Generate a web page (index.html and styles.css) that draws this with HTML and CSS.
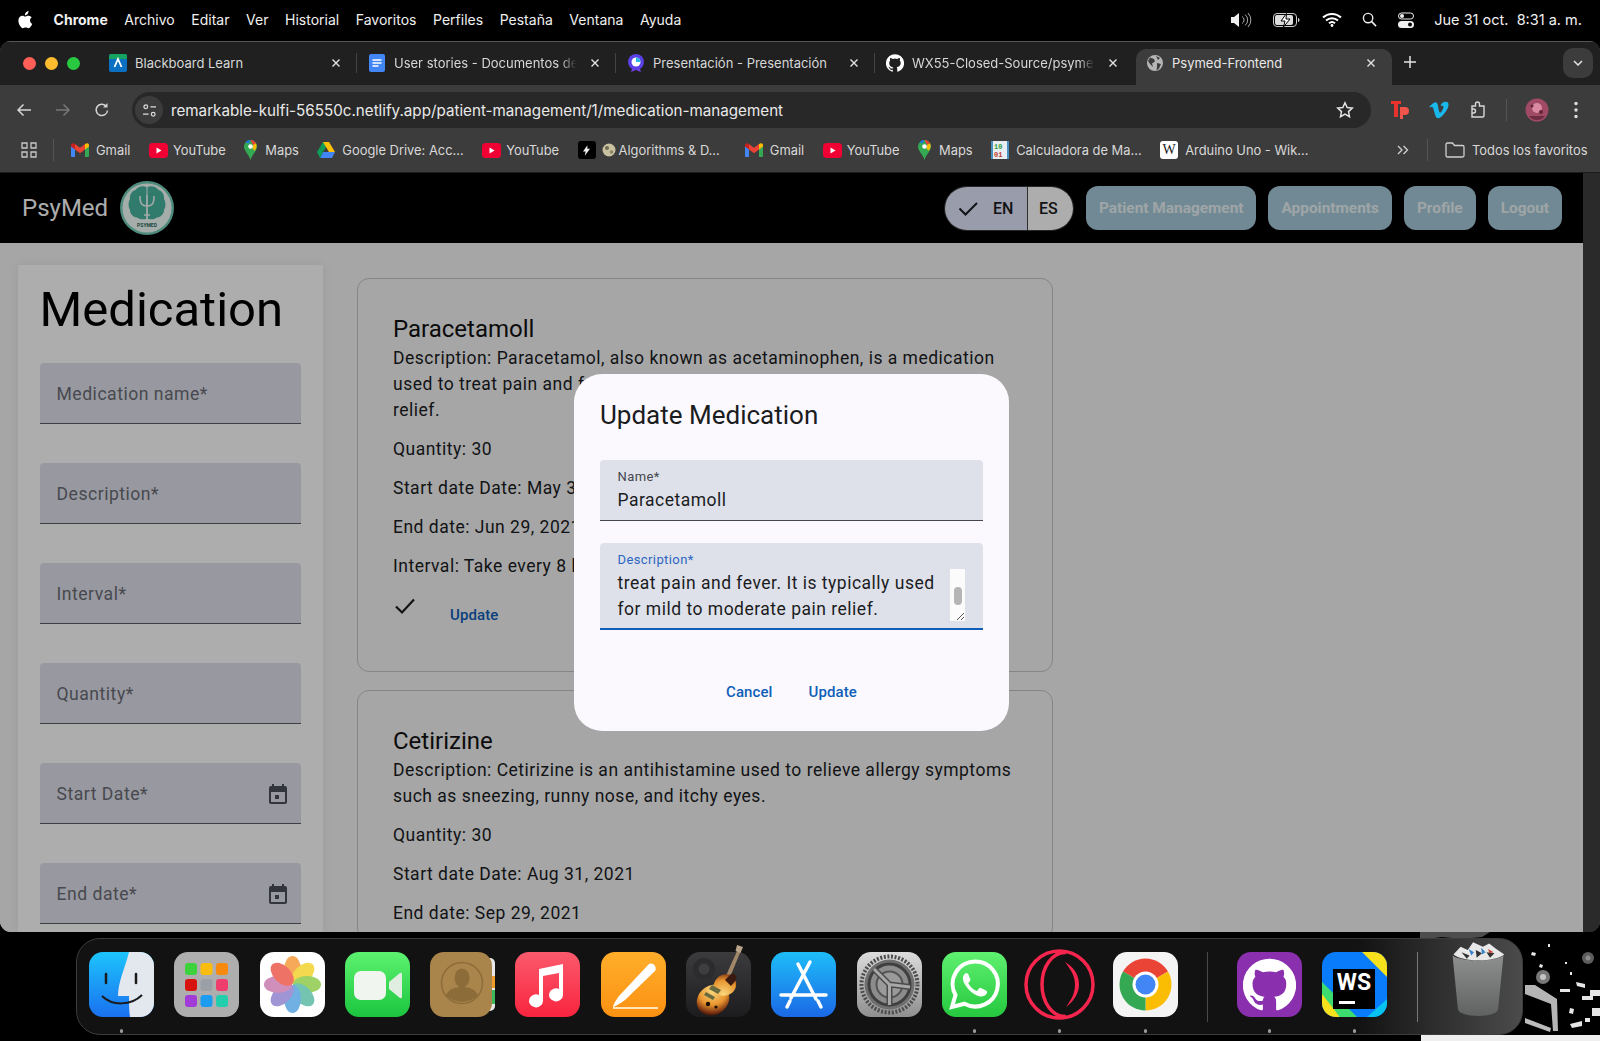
FILE: index.html
```html
<!DOCTYPE html>
<html lang="es">
<head>
<meta charset="utf-8">
<title>Psymed-Frontend</title>
<link rel="stylesheet" href="styles.css">
</head>
<body>
<svg class="defs" width="0" height="0" aria-hidden="true">
  <defs>
    <symbol id="s-gmail" viewBox="0 0 18 14">
      <path d="M0 3v10a1 1 0 0 0 1 1h3V6z" fill="#4285f4"/>
      <path d="M18 3v10a1 1 0 0 1-1 1h-3V6z" fill="#34a853"/>
      <path d="M14 1v5.500l4-3V2c0-1.500-1.700-2.300-2.800-1.400z" fill="#fbbc04"/>
      <path d="M4 6.500V1l5 3.800L14 1v5.500L9 10.300z" fill="#ea4335"/>
      <path d="M0 2v1.500l4 3V1L2.800.600C1.700-.300 0 .500 0 2z" fill="#c5221f"/>
    </symbol>
    <symbol id="s-yt" viewBox="0 0 19 15">
      <rect width="19" height="15" rx="3.500" fill="#f00033"/>
      <path d="M7.500 4.500v6l5-3z" fill="#fff"/>
    </symbol>
    <symbol id="s-maps" viewBox="0 0 13 20">
      <path d="M6.500 0A6.500 6.500 0 0 0 0 6.500c0 4.500 5 8 6.500 13.500C8 14.500 13 11 13 6.500A6.500 6.500 0 0 0 6.500 0z" fill="#34a853"/>
      <path d="M1.500 2.300A6.500 6.500 0 0 1 6.500 0l-2 3.500z" fill="#1a73e8"/>
      <path d="M6.500 0A6.500 6.500 0 0 1 12 3.300L9 5z" fill="#ea4335"/>
      <path d="M12 3.300c1.200 3 .5 5-1.500 7.500L8.500 8.500 9 5z" fill="#fbbc04"/>
      <circle cx="6.500" cy="6.500" r="2.300" fill="#fff"/>
    </symbol>
    <symbol id="s-close" viewBox="0 0 10 10">
      <path d="M1.500 1.500l7 7M8.500 1.500l-7 7" stroke="#e3e3e3" stroke-width="1.400" fill="none"/>
    </symbol>
    <symbol id="s-cal" viewBox="0 0 24 24">
      <path d="M19 4h-1V2h-2v2H8V2H6v2H5a2 2 0 0 0-2 2v14a2 2 0 0 0 2 2h14a2 2 0 0 0 2-2V6a2 2 0 0 0-2-2zm0 16H5V10h14zM9 13h4v4H9z" fill="#44474e"/>
    </symbol>
    <symbol id="s-gh" viewBox="0 0 24 24">
      <path d="M12 .3a12 12 0 0 0-3.800 23.400c.6.100.8-.3.8-.6v-2c-3.300.7-4-1.600-4-1.600-.6-1.400-1.400-1.800-1.400-1.800-1-.7.100-.7.100-.7 1.200.1 1.800 1.200 1.800 1.200 1 1.800 2.800 1.300 3.500 1 .1-.8.4-1.300.8-1.600-2.700-.3-5.500-1.300-5.500-6 0-1.200.5-2.300 1.300-3.100-.2-.4-.6-1.600 0-3.200 0 0 1-.3 3.400 1.200a11.500 11.500 0 0 1 6 0c2.300-1.500 3.300-1.200 3.300-1.200.6 1.600.2 2.800 0 3.200.9.800 1.300 1.900 1.300 3.200 0 4.600-2.800 5.600-5.500 5.900.5.400.9 1 .9 2.200v3.300c0 .3.100.7.8.6A12 12 0 0 0 12 .3"/>
    </symbol>
    <linearGradient id="g-finder" x1="0" y1="0" x2="0" y2="1"><stop offset="0" stop-color="#1dc4fc"/><stop offset="1" stop-color="#1a70f0"/></linearGradient>
    <linearGradient id="g-face" x1="0" y1="0" x2="0" y2="1"><stop offset="0" stop-color="#5df26f"/><stop offset="1" stop-color="#1bc53e"/></linearGradient>
    <linearGradient id="g-music" x1="0" y1="0" x2="0" y2="1"><stop offset="0" stop-color="#fb5a6c"/><stop offset="1" stop-color="#f9243f"/></linearGradient>
    <linearGradient id="g-pages" x1="0" y1="0" x2="0" y2="1"><stop offset="0" stop-color="#ffae2b"/><stop offset="1" stop-color="#fb9112"/></linearGradient>
    <linearGradient id="g-store" x1="0" y1="0" x2="0" y2="1"><stop offset="0" stop-color="#1ebdf8"/><stop offset="1" stop-color="#1b68e6"/></linearGradient>
    <linearGradient id="g-set" x1="0" y1="0" x2="0" y2="1"><stop offset="0" stop-color="#dcdcdc"/><stop offset="1" stop-color="#8f8f8f"/></linearGradient>
    <linearGradient id="g-wa" x1="0" y1="0" x2="0" y2="1"><stop offset="0" stop-color="#5ff06f"/><stop offset="1" stop-color="#25c83f"/></linearGradient>
    <linearGradient id="g-trash" x1="0" y1="0" x2="0" y2="1"><stop offset="0" stop-color="#8e9090"/><stop offset="1" stop-color="#606262"/></linearGradient>
    <linearGradient id="g-gb" x1="0" y1="0" x2="0" y2="1"><stop offset="0" stop-color="#3c3c3e"/><stop offset="1" stop-color="#1c1c1e"/></linearGradient>
    <radialGradient id="g-guitar" gradientUnits="userSpaceOnUse" cx="32" cy="40" r="26"><stop offset="0" stop-color="#f9da80"/><stop offset=".55" stop-color="#e8952f"/><stop offset=".85" stop-color="#7a3212"/><stop offset="1" stop-color="#2a0e06"/></radialGradient>
  </defs>
</svg>

<div class="wallpaper">
  <svg viewBox="0 0 180 109" width="180" height="109" preserveAspectRatio="none" aria-hidden="true">
    <rect width="180" height="109" fill="#000"/>
    <rect x="1" y="103" width="179" height="6" fill="#efefef"/>
    <path d="M0 0h70l-8 5-20 2-20-2-22 3z" fill="#4d4d4d"/>
    <path d="M105 53l10 0 22 14 1 32-5 0-2-27-26-10z" fill="#b5b5b5"/>
    <path d="M105 86l26 10-1 4-25-9z" fill="#bcbcbc"/>
    <circle cx="123" cy="45" r="7" fill="#777"/><circle cx="123" cy="45" r="3" fill="#c4c4c4"/>
    <circle cx="168" cy="26" r="6" fill="#5c5c5c"/><circle cx="168" cy="26" r="2.500" fill="#8c8c8c"/>
    <path d="M140 57h10v3h-10zM156 50l9 2v4l-8-2zM162 64h11v4h-11zM170 58h10v6h-10zM150 92l12-3v5l-10 2zM112 20l4 1-1 3-4-1zM120 32l3 1-1 3-3-1zM172 76h8v8h-8zM150 76l4 1-1 5-4-1zM165 86h5v4h-5zM128 12h2v3h-2zM145 30h2v2h-2zM150 40h2v3h-2z" fill="#e6e6e6"/>
  </svg>
</div>

<header class="menubar">
  <div class="menu-left">
    <svg class="apple" viewBox="0 0 16 19" width="15" height="18" aria-hidden="true"><path fill="#fff" d="M11.200 0c.1 1.100-.3 2.200-1 3-.7.800-1.800 1.400-2.800 1.300-.1-1.100.4-2.200 1-2.900C9.100.6 10.300.100 11.200 0zM14.700 6.500c-.1.100-1.900 1.100-1.900 3.400 0 2.600 2.300 3.500 2.400 3.600 0 .1-.4 1.300-1.200 2.500-.8 1.100-1.600 2.200-2.800 2.200-1.200 0-1.600-.7-3-.7s-1.900.7-3 .7c-1.200 0-2-1.100-2.900-2.300C1.200 14.400.4 12.200.4 10.100c0-3.400 2.200-5.200 4.400-5.200 1.200 0 2.100.8 2.900.8.700 0 1.800-.8 3.100-.8.500 0 2.500 0 3.900 1.600z"/></svg>
    <span class="menu-app">Chrome</span>
    <span>Archivo</span><span>Editar</span><span>Ver</span><span>Historial</span><span>Favoritos</span><span>Perfiles</span><span>Pestaña</span><span>Ventana</span><span>Ayuda</span>
  </div>
  <div class="menu-right">
    <svg viewBox="0 0 22 16" width="22" height="16" aria-hidden="true"><path d="M0 5h3l5-4v14l-5-4H0z" fill="#eee"/><path d="M11 4.500a4 4 0 0 1 0 7M14 2.500a7 7 0 0 1 0 11M17 1a10 10 0 0 1 0 14" stroke="#aaa" stroke-width="1" fill="none"/></svg>
    <svg viewBox="0 0 28 14" width="28" height="14" aria-hidden="true"><rect x=".5" y=".5" width="23" height="13" rx="3.500" fill="none" stroke="#ccc"/><rect x="2" y="2" width="18" height="10" rx="2" fill="#ddd"/><path d="M25 5v4c1 0 1.500-1 1.500-2S26 5 25 5z" fill="#ccc"/><path d="M13.500 0.500L8 8h4l-1.500 6L17 6h-4z" fill="#fff" stroke="#000" stroke-width="1"/></svg>
    <svg viewBox="0 0 20 15" width="20" height="15" aria-hidden="true"><path d="M1 5.500a13 13 0 0 1 18 0M4 8.500a9 9 0 0 1 12 0M7 11.300a4.500 4.500 0 0 1 6 0" stroke="#fff" stroke-width="2" fill="none"/><circle cx="10" cy="13.500" r="1.400" fill="#fff"/></svg>
    <svg viewBox="0 0 16 16" width="15" height="15" aria-hidden="true"><circle cx="6.500" cy="6.500" r="5" stroke="#eee" stroke-width="1.500" fill="none"/><path d="M10.300 10.300L15 15" stroke="#eee" stroke-width="1.700"/></svg>
    <svg viewBox="0 0 16 16" width="16" height="16" aria-hidden="true"><rect x=".5" y="1" width="15" height="6" rx="3" fill="none" stroke="#eee"/><circle cx="4" cy="4" r="2" fill="#eee"/><rect y="9" width="16" height="7" rx="3.500" fill="#eee"/><circle cx="12" cy="12.500" r="2" fill="#000"/></svg>
    <span class="clock">Jue 31 oct.&nbsp; 8:31 a. m.</span>
  </div>
</header>

<div class="window">
  <div class="tabstrip">
    <div class="lights"><i class="light red"></i><i class="light yellow"></i><i class="light green"></i></div>
    <div class="tab">
      <svg class="fav" viewBox="0 0 18 18" aria-hidden="true"><rect width="18" height="18" rx="2" fill="#0b6fc2"/><path d="M0 2a2 2 0 0 1 2-2h14a2 2 0 0 1 2 2v3H0z" fill="#16a35f"/><path d="M5.500 13L9 5l3.500 8" stroke="#fff" stroke-width="1.800" fill="none"/></svg>
      <span class="tab-title">Blackboard Learn</span>
      <svg class="tab-x" aria-hidden="true"><use href="#s-close"/></svg>
    </div>
    <div class="tab">
      <svg class="fav" viewBox="0 0 18 18" aria-hidden="true"><rect x="1" width="16" height="18" rx="2" fill="#4285f4"/><path d="M4.500 6h9M4.500 9h9M4.500 12h6" stroke="#fff" stroke-width="1.500"/></svg>
      <span class="tab-title fade">User stories - Documentos de</span>
      <svg class="tab-x" aria-hidden="true"><use href="#s-close"/></svg>
    </div>
    <div class="tab">
      <svg class="fav" viewBox="0 0 18 18" aria-hidden="true"><path d="M5 15l-1 3 5-2 5 2-1-3z" fill="#7b3fe4"/><circle cx="9" cy="8" r="8" fill="#5a3fe4"/><circle cx="9" cy="8" r="4.500" fill="#fff"/><path d="M9 8V3.500A4.500 4.500 0 0 1 13.500 8z" fill="#28b8e8"/></svg>
      <span class="tab-title">Presentación - Presentación</span>
      <svg class="tab-x" aria-hidden="true"><use href="#s-close"/></svg>
    </div>
    <div class="tab">
      <svg class="fav fav-gh" aria-hidden="true"><use href="#s-gh"/></svg>
      <span class="tab-title fade">WX55-Closed-Source/psymed</span>
      <svg class="tab-x" aria-hidden="true"><use href="#s-close"/></svg>
    </div>
    <div class="tab tab-active">
      <svg class="fav" viewBox="0 0 18 18" aria-hidden="true"><circle cx="9" cy="9" r="8" fill="#b5b5b5"/><path d="M4 3.500l4 1.500 1 2.500-3 2 1 3.500-3-3-2-3zM11 9l4 1-2 4.500-2.500 2 .5-3.500zM10 2l4 2-2 2z" fill="#3c3c3c"/></svg>
      <span class="tab-title">Psymed-Frontend</span>
      <svg class="tab-x" aria-hidden="true"><use href="#s-close"/></svg>
    </div>
    <svg class="tab-plus" viewBox="0 0 14 14" aria-hidden="true"><path d="M7 1v12M1 7h12" stroke="#e3e3e3" stroke-width="1.500"/></svg>
    <div class="tab-menu"><svg viewBox="0 0 10 6" width="10" height="6" aria-hidden="true"><path d="M1 1l4 4 4-4" stroke="#e3e3e3" stroke-width="1.500" fill="none"/></svg></div>
  </div>

  <div class="toolbar">
    <svg class="nav" viewBox="0 0 16 16" aria-hidden="true"><path d="M15 8H2M7.500 2.500L2 8l5.500 5.500" stroke="#d4d4d4" stroke-width="1.500" fill="none"/></svg>
    <svg class="nav" viewBox="0 0 16 16" aria-hidden="true"><path d="M1 8h13M8.500 2.500L14 8l-5.500 5.500" stroke="#777" stroke-width="1.500" fill="none"/></svg>
    <svg class="nav" viewBox="0 0 16 16" aria-hidden="true"><path d="M13.500 8.500A5.700 5.700 0 1 1 12 4" stroke="#d4d4d4" stroke-width="1.500" fill="none"/><path d="M13.500 1v4.500H9z" fill="#d4d4d4"/></svg>
    <div class="omnibox">
      <span class="site-info"><svg viewBox="0 0 16 14" width="15" height="13" aria-hidden="true"><circle cx="4" cy="3" r="2" stroke="#ddd" stroke-width="1.300" fill="none"/><path d="M9 3h6M1 11h6" stroke="#ddd" stroke-width="1.300"/><circle cx="12" cy="11" r="2" stroke="#ddd" stroke-width="1.300" fill="none"/></svg></span>
      <span class="url">remarkable-kulfi-56550c.netlify.app/patient-management/1/medication-management</span>
      <svg class="star" viewBox="0 0 18 18" width="18" height="18" aria-hidden="true"><path d="M9 1.800l2.200 4.700 5.100.6-3.800 3.500 1 5.100L9 13.200l-4.500 2.500 1-5.100-3.800-3.500 5.100-.6z" stroke="#e3e3e3" stroke-width="1.500" fill="none"/></svg>
    </div>
    <div class="ext-row">
      <svg viewBox="0 0 18 20" width="18" height="20" aria-hidden="true"><path d="M0 1h10v3H7v13H3V4H0z" fill="#e8322c"/><path d="M9 7h5a3.500 3.500 0 0 1 0 8h-2v4H9z" fill="#f0544a"/></svg>
      <svg viewBox="0 0 20 18" width="20" height="18" aria-hidden="true"><path d="M19.500 4.500c-.1 1.900-1.400 4.500-4 7.800C13 15.700 10.800 17.300 9 17.300c-1.100 0-2-1-2.800-3L4.700 8.700C4.100 6.700 3.500 5.700 2.800 5.700c-.2 0-.7.300-1.500.9L.4 5.500C1.400 4.600 2.300 3.800 3.200 3c1.300-1.100 2.300-1.700 2.900-1.800 1.500-.1 2.500.9 2.800 3.100.4 2.400.7 3.900.8 4.400.4 2 .9 3 1.400 3 .4 0 1-.7 1.900-2 .9-1.400 1.300-2.400 1.400-3.100.1-1.200-.4-1.800-1.400-1.800-.5 0-1 .1-1.500.3C12.500 1.900 14.400.700 17 .800c1.800 0 2.700 1.300 2.500 3.700z" fill="#1ab7ea"/></svg>
      <svg viewBox="0 0 18 18" width="18" height="18" aria-hidden="true"><path d="M3 5h3.500V3a2 2 0 0 1 4 0v2H15v9.500a1.500 1.500 0 0 1-1.500 1.500H3zM3 5v3h1.500a1.500 1.500 0 0 1 0 4H3v4" stroke="#d8d8d8" stroke-width="1.400" fill="none"/></svg>
      <i class="ext-sep"></i>
      <svg viewBox="0 0 24 24" width="24" height="24" aria-hidden="true"><circle cx="12" cy="12" r="11.500" fill="#a04a66"/><circle cx="12" cy="10" r="5" fill="#d98aa2"/><circle cx="7" cy="8" r="1.500" fill="#642436"/><circle cx="16" cy="14" r="2" fill="#642436"/><path d="M4 18a10 10 0 0 0 16 0z" fill="#6c2d42"/></svg>
      <svg class="ext-dots" viewBox="0 0 4 18" width="4" height="18" aria-hidden="true"><circle cx="2" cy="2.500" r="1.700" fill="#ddd"/><circle cx="2" cy="9" r="1.700" fill="#ddd"/><circle cx="2" cy="15.500" r="1.700" fill="#ddd"/></svg>
    </div>
  </div>

  <nav class="bookmarks">
    <svg class="bm-grid" viewBox="0 0 16 16" aria-hidden="true"><path d="M1 1h5v5H1zM10 1h5v5h-5zM1 10h5v5H1zM10 10h5v5h-5z" stroke="#c8c8c8" stroke-width="1.300" fill="none"/></svg>
    <i class="bm-sep"></i>
    <a class="bm"><svg class="bi bi-g" aria-hidden="true"><use href="#s-gmail"/></svg>Gmail</a>
    <a class="bm"><svg class="bi bi-y" aria-hidden="true"><use href="#s-yt"/></svg>YouTube</a>
    <a class="bm"><svg class="bi bi-m" aria-hidden="true"><use href="#s-maps"/></svg>Maps</a>
    <a class="bm"><svg class="bi bi-d" viewBox="0 0 18 16" aria-hidden="true"><path d="M6 0h6L6 10 3 5z" fill="#0f9d58"/><path d="M12 0l6 10h-6L6 0z" fill="#ffc107"/><path d="M18 10l-3 6H3l3-6z" fill="#4285f4"/><path d="M6 10l-3 6-3-6 3-5z" fill="#0f9d58"/></svg>Google Drive: Acc...</a>
    <a class="bm"><svg class="bi bi-y" aria-hidden="true"><use href="#s-yt"/></svg>YouTube</a>
    <a class="bm bm-algo"><span class="bolt"><svg viewBox="0 0 8 12" width="7" height="11" aria-hidden="true"><path d="M5 0L0 7h3l-1 5 6-8H5z" fill="#eee"/></svg></span><svg class="bi bi-globe" viewBox="0 0 14 14" aria-hidden="true"><circle cx="7" cy="7" r="6.500" fill="#c9c2a0"/><circle cx="5" cy="5" r="2" fill="#6e6a50"/><circle cx="9.500" cy="9" r="1.800" fill="#8a8468"/></svg>Algorithms &amp; D...</a>
    <a class="bm"><svg class="bi bi-g" aria-hidden="true"><use href="#s-gmail"/></svg>Gmail</a>
    <a class="bm"><svg class="bi bi-y" aria-hidden="true"><use href="#s-yt"/></svg>YouTube</a>
    <a class="bm"><svg class="bi bi-m" aria-hidden="true"><use href="#s-maps"/></svg>Maps</a>
    <a class="bm"><svg class="bi bi-c" viewBox="0 0 18 18" aria-hidden="true"><rect width="18" height="18" fill="#e8eef2"/><rect x="0" y="0" width="2" height="18" fill="#4a8fc0"/><rect x="16" y="0" width="2" height="18" fill="#4a8fc0"/><text x="3" y="8" class="calc-a">10</text><text x="3" y="16" class="calc-b">01</text></svg>Calculadora de Ma...</a>
    <a class="bm"><span class="wiki">W</span>Arduino Uno - Wik...</a>
    <svg class="bm-more" viewBox="0 0 12 10" aria-hidden="true"><path d="M1 1l4 4-4 4M6.500 1l4 4-4 4" stroke="#d0d0d0" stroke-width="1.300" fill="none"/></svg>
    <i class="bm-sep bm-sep2"></i>
    <a class="bm bm-all"><svg class="bi bi-f" viewBox="0 0 20 16" aria-hidden="true"><path d="M1 2.500A1.500 1.500 0 0 1 2.500 1h5l2 2.500h8A1.500 1.500 0 0 1 19 5v8.500a1.500 1.500 0 0 1-1.500 1.500h-15A1.500 1.500 0 0 1 1 13.500z" stroke="#d0d0d0" stroke-width="1.300" fill="none"/></svg>Todos los favoritos</a>
  </nav>

  <div class="viewport">
    <div class="page">
      <div class="app-header">
        <div class="brand">
          <span class="brand-name">PsyMed</span>
          <svg class="logo" viewBox="0 0 54 54" width="54" height="54" aria-hidden="true">
            <circle cx="27" cy="27" r="27" fill="#74cfba"/>
            <circle cx="27" cy="27" r="24.500" fill="#f4fffb"/>
            <path d="M26.500 6c-4-2-9 0-11 3-4 1-6 5-5.500 9-2 3-2 8 0 11 0 4 3 7 7 7.500 3 2 7 2.500 9.500 1zM27.500 6c4-2 9 0 11 3 4 1 6 5 5.500 9 2 3 2 8 0 11 0 4-3 7-7 7.500-3 2-7 2.500-9.500 1z" fill="#47b5a0"/>
            <path d="M27 14v24M20 15c0 8 2 10 7 10s7-2 7-10M24 34h6" stroke="#eefaf7" stroke-width="1.600" fill="none"/>
            <text x="27" y="46" class="logo-text" text-anchor="middle">PSYMED</text>
          </svg>
        </div>
        <div class="header-actions">
          <div class="lang">
            <span class="lang-on"><svg viewBox="0 0 24 24" width="24" height="24" aria-hidden="true"><path d="M3.500 12.500l6 6L21 7" stroke="#1a1c22" stroke-width="2" fill="none"/></svg>EN</span>
            <span class="lang-off">ES</span>
          </div>
          <button class="nav-btn">Patient Management</button>
          <button class="nav-btn">Appointments</button>
          <button class="nav-btn">Profile</button>
          <button class="nav-btn">Logout</button>
        </div>
      </div>
      <main class="main">
        <aside class="sidebar">
          <h1 class="side-title">Medication</h1>
          <div class="field">Medication name*</div>
          <div class="field">Description*</div>
          <div class="field">Interval*</div>
          <div class="field">Quantity*</div>
          <div class="field">Start Date*<svg class="cal" aria-hidden="true"><use href="#s-cal"/></svg></div>
          <div class="field">End date*<svg class="cal" aria-hidden="true"><use href="#s-cal"/></svg></div>
        </aside>
        <section class="cards">
          <article class="card">
            <h2 class="card-title">Paracetamoll</h2>
            <p class="card-line">Description: Paracetamol, also known as acetaminophen, is a medication used to treat pain and fever. It is typically used for mild to moderate pain relief.</p>
            <p class="card-line">Quantity: 30</p>
            <p class="card-line">Start date Date: May 30, 2021</p>
            <p class="card-line">End date: Jun 29, 2021</p>
            <p class="card-line">Interval: Take every 8 hours</p>
            <div class="card-actions">
              <svg class="check" viewBox="0 0 24 24" width="24" height="24" aria-hidden="true"><path d="M3 12.500l6 6L21 5.500" stroke="#1a1c1e" stroke-width="2.200" fill="none"/></svg>
              <span class="card-update">Update</span>
            </div>
          </article>
          <article class="card">
            <h2 class="card-title">Cetirizine</h2>
            <p class="card-line">Description: Cetirizine is an antihistamine used to relieve allergy symptoms such as sneezing, runny nose, and itchy eyes.</p>
            <p class="card-line">Quantity: 30</p>
            <p class="card-line">Start date Date: Aug 31, 2021</p>
            <p class="card-line">End date: Sep 29, 2021</p>
          </article>
        </section>
      </main>
      <div class="scrim"></div>
      <div class="modal" role="dialog">
        <h2 class="modal-title">Update Medication</h2>
        <div class="m-field">
          <span class="m-label">Name*</span>
          <span class="m-value">Paracetamoll</span>
        </div>
        <div class="m-field m-field-focus">
          <span class="m-label m-label-focus">Description*</span>
          <span class="m-value">treat pain and fever. It is typically used<br>for mild to moderate pain relief.</span>
          <span class="m-scroll"><i class="m-thumb"></i><svg class="m-grip" viewBox="0 0 10 10" width="10" height="10" aria-hidden="true"><path d="M9 2L2 9M9 6L6 9" stroke="#555" stroke-width="1" fill="none"/></svg></span>
        </div>
        <div class="m-actions"><span class="m-btn">Cancel</span><span class="m-btn">Update</span></div>
      </div>
    </div>
    <div class="v-scrollbar"></div>
  </div>
</div>

<footer class="dock">
  <div class="dock-item dot">
    <svg viewBox="0 0 65 65" aria-hidden="true"><rect width="65" height="65" rx="14" fill="url(#g-finder)"/><path d="M40 0h11a14 14 0 0 1 14 14v37a14 14 0 0 1-14 14H41c-1-6-1-14-1-21h-11c0-14 7-28 11-44z" fill="#e3e7ee"/><path d="M17 22v9M47 22v9" stroke="#1a1a1a" stroke-width="2.500" stroke-linecap="round"/><path d="M13 44c10 10 29 10 40-1" stroke="#1a1a1a" stroke-width="2" fill="none"/></svg>
  </div>
  <div class="dock-item">
    <svg viewBox="0 0 65 65" aria-hidden="true"><rect width="65" height="65" rx="14" fill="#aeaeae"/><rect x="11" y="11" width="12" height="12" rx="3" fill="#3cd23c"/><rect x="26.500" y="11" width="12" height="12" rx="3" fill="#fbbd0d"/><rect x="42" y="11" width="12" height="12" rx="3" fill="#f78a0d"/><rect x="11" y="27" width="12" height="12" rx="3" fill="#d7130f"/><rect x="26.500" y="27" width="12" height="12" rx="3" fill="#9aa0a6"/><rect x="42" y="27" width="12" height="12" rx="3" fill="#ef3e6e"/><rect x="11" y="43" width="12" height="12" rx="3" fill="#a23cd8"/><rect x="26.500" y="43" width="12" height="12" rx="3" fill="#1b9cf0"/><rect x="42" y="43" width="12" height="12" rx="3" fill="#22ceac"/></svg>
  </div>
  <div class="dock-item">
    <svg viewBox="0 0 65 65" aria-hidden="true"><rect width="65" height="65" rx="14" fill="#fff"/><g opacity=".78"><ellipse cx="32.500" cy="18" rx="8.500" ry="14" fill="#f5912d"/><ellipse cx="32.500" cy="18" rx="8.500" ry="14" fill="#f2cf1d" transform="rotate(45 32.500 32.500)"/><ellipse cx="32.500" cy="18" rx="8.500" ry="14" fill="#83c53c" transform="rotate(90 32.500 32.500)"/><ellipse cx="32.500" cy="18" rx="8.500" ry="14" fill="#4cb49a" transform="rotate(135 32.500 32.500)"/><ellipse cx="32.500" cy="18" rx="8.500" ry="14" fill="#4a9bdc" transform="rotate(180 32.500 32.500)"/><ellipse cx="32.500" cy="18" rx="8.500" ry="14" fill="#8578c8" transform="rotate(225 32.500 32.500)"/><ellipse cx="32.500" cy="18" rx="8.500" ry="14" fill="#c46fa8" transform="rotate(270 32.500 32.500)"/><ellipse cx="32.500" cy="18" rx="8.500" ry="14" fill="#ea4b3c" transform="rotate(315 32.500 32.500)"/></g></svg>
  </div>
  <div class="dock-item">
    <svg viewBox="0 0 65 65" aria-hidden="true"><rect width="65" height="65" rx="14" fill="url(#g-face)"/><rect x="9" y="19" width="32" height="29" rx="7" fill="#f0f5f0"/><path d="M44 30l11-9c1-.5 2 0 2 1v23c0 1-1 1.500-2 1l-11-9z" fill="#dfeee0"/></svg>
  </div>
  <div class="dock-item">
    <svg viewBox="0 0 65 65" aria-hidden="true"><rect x="50" y="6" width="15" height="53" rx="5" fill="#e8e8e8"/><rect x="60" y="24" width="5" height="12" fill="#f09a2a"/><rect x="60" y="38" width="5" height="14" fill="#3bb85a"/><rect width="62" height="65" rx="14" fill="#a9854b"/><circle cx="32" cy="31" r="20.500" fill="none" stroke="#8c6c38" stroke-width="1.500"/><ellipse cx="32" cy="26" rx="7.500" ry="9.500" fill="#8c6c38"/><path d="M16 43c3-6 9-8 16-8s13 2 16 8c-8 9-24 9-32 0z" fill="#8c6c38"/></svg>
  </div>
  <div class="dock-item">
    <svg viewBox="0 0 65 65" aria-hidden="true"><rect width="65" height="65" rx="14" fill="url(#g-music)"/><path d="M24 17l24-5v31a7 6.500 0 1 1-4-6V21l-16 3v25a7 6.500 0 1 1-4-6z" fill="#fff"/></svg>
  </div>
  <div class="dock-item">
    <svg viewBox="0 0 65 65" aria-hidden="true"><rect width="65" height="65" rx="14" fill="url(#g-pages)"/><path d="M54 14c-2-3-5-3-7-1L18 44c-3 4-6 9-6 11 3-1 8-4 12-7l30-29c1-1 1-3 0-5z" fill="#fff"/><path d="M12 55h45v2H12z" fill="#ffe6b8"/></svg>
  </div>
  <div class="dock-item">
    <svg class="dock-over" viewBox="0 -18 65 83" aria-hidden="true">
      <rect width="65" height="65" rx="14" fill="url(#g-gb)"/>
      <circle cx="18" cy="17" r="11" fill="#2c2c2e"/><circle cx="18" cy="17" r="5.500" fill="#3e3e40"/>
      <path d="M38 28L52-3l3 1.500L42 30z" fill="#a08868"/>
      <path d="M51-7l6 2-2.500 6-5-2z" fill="#b8a488"/>
      <g fill="url(#g-guitar)">
        <ellipse cx="27" cy="48" rx="17" ry="14.500" transform="rotate(-35 27 48)"/>
        <ellipse cx="39" cy="33" rx="11.500" ry="10.500" transform="rotate(-35 39 33)"/>
      </g>
      <path d="M45 22c4-1 6 2 5 6l-5 6-6-6z" fill="#3a1a10"/>
      <path d="M26 33l9 5-3 4-9-5zM20 40l9 5-2 3-9-5z" fill="#6a6a40"/>
      <circle cx="22" cy="52" r="2.200" fill="#1c0e08"/><circle cx="30" cy="55" r="1.600" fill="#1c0e08"/>
    </svg>
  </div>
  <div class="dock-item">
    <svg viewBox="0 0 65 65" aria-hidden="true"><rect width="65" height="65" rx="14" fill="url(#g-store)"/><path d="M39 10L20 46M27 12l18 35M10 43h33M36 43h19M19 49l-3 6M47 49l3 6" stroke="#fff" stroke-width="3.500" stroke-linecap="round" fill="none"/></svg>
  </div>
  <div class="dock-item">
    <svg viewBox="0 0 65 65" aria-hidden="true"><rect width="65" height="65" rx="14" fill="url(#g-set)"/><circle cx="32.500" cy="32.500" r="28" fill="none" stroke="#4c4c4c" stroke-width="4" stroke-dasharray="2 1.600"/><circle cx="32.500" cy="32.500" r="25" fill="#6f6f6f"/><circle cx="32.500" cy="32.500" r="20.500" fill="#8c8c8c" stroke="#3f3f3f" stroke-width="3"/><circle cx="32.500" cy="32.500" r="13" fill="#9a9a9a" stroke="#555" stroke-width="2"/><path d="M32.500 32.500L17 17M32.500 32.500L53 35M32.500 32.500V53" stroke="#4a4a4a" stroke-width="6"/><path d="M32.500 32.500L17 17M32.500 32.500L53 35M32.500 32.500V53" stroke="#a8a8a8" stroke-width="3"/></svg>
  </div>
  <div class="dock-item dot">
    <svg viewBox="0 0 65 65" aria-hidden="true"><rect width="65" height="65" rx="14" fill="url(#g-wa)"/><path d="M33 9.500A22.500 22.500 0 0 0 13.500 43l-3.500 12 12.500-3.300A22.500 22.500 0 1 0 33 9.500z" fill="none" stroke="#fff" stroke-width="4"/><path d="M24 21c-2 1-3.500 3.500-3 6.500 1 6 9 15.500 17 17 3 .5 6-1 7-3.500.3-1.200 0-2-1-2.500l-5-2.500c-1-.4-1.500 0-2 .5l-1.500 2c-.5.500-1 .5-1.500.3-3-1.300-6-4.300-7.500-7-.2-.6 0-1 .4-1.500l1.300-1.600c.3-.5.3-1 .1-1.500l-2-5c-.5-1-1.200-1.200-2.300-.700z" fill="#fff"/></svg>
  </div>
  <div class="dock-item dot">
    <svg class="opera" viewBox="0 0 71 71" aria-hidden="true"><circle cx="35.500" cy="35.500" r="33.500" fill="none" stroke="#f5254d" stroke-width="3.500"/><path d="M42 3.500C28 3 18 18 18 35.500S28 68 42 67.500" fill="none" stroke="#f5254d" stroke-width="3.500"/><path d="M41 13c10 6 14 14 14 22.500S50 52 42 58c5-7 9-13 9-22.500S46 20 41 13z" fill="#f5254d"/></svg>
  </div>
  <div class="dock-item dot">
    <svg viewBox="0 0 65 65" aria-hidden="true"><rect width="65" height="65" rx="14" fill="#f4f4f4"/><path d="M32.500 32.500L10 19.500A26 26 0 0 1 55 19.500z" fill="#e94435"/><path d="M32.500 32.500L55 19.500A26 26 0 0 1 32.500 58.500z" fill="#fbbc04"/><path d="M32.500 32.500V58.500A26 26 0 0 1 10 19.500z" fill="#34a853"/><circle cx="32.500" cy="32.500" r="13" fill="#fff"/><circle cx="32.500" cy="32.500" r="10" fill="#4285f4"/></svg>
  </div>
  <i class="dock-sep"></i>
  <div class="dock-item dot">
    <svg viewBox="0 0 65 65" aria-hidden="true"><rect width="65" height="65" rx="14" fill="#8a2fad"/><g class="dock-gh"><use href="#s-gh" x="6" y="6" width="53" height="53"/></g></svg>
  </div>
  <div class="dock-item dot">
    <svg viewBox="0 0 65 65" aria-hidden="true"><rect width="65" height="65" rx="14" fill="#087cfa"/><path d="M40 0h11a14 14 0 0 1 14 14v11z" fill="#f7e01c"/><path d="M0 40l18 25H14A14 14 0 0 1 0 51z" fill="#f7e01c"/><path d="M0 30l35 35H18L0 42z" fill="#3ddc6e"/><path d="M45 65l20-18v4a14 14 0 0 1-14 14z" fill="#07c3f2"/><rect x="11" y="17" width="42" height="40" fill="#000"/><text x="32" y="38" class="ws-text" text-anchor="middle">WS</text><rect x="17" y="49" width="16" height="3" fill="#fff"/></svg>
  </div>
  <i class="dock-sep"></i>
  <div class="dock-item">
    <svg class="trash" viewBox="0 -4 65 71" preserveAspectRatio="none" aria-hidden="true"><path d="M4 11c10 6 47 6 57 0l-6 49c-1 4-11 6-22 6S11 64 10 60z" fill="url(#g-trash)"/><path d="M5 10l8-7 8 3 6-7 11 4 7-3 8 5 9 5c-10 7-47 7-57 0z" fill="#e8e8e8"/><path d="M14 8l9 3-3 3zM30 6l7 3-6 4zM42 8l9 1-5 4z" fill="#333"/><path d="M22 5l6 3-3 3zM36 4l5 4-4 2z" fill="#3a82c8"/><path d="M44 5l6 3-5 1z" fill="#c84a3a"/></svg>
  </div>
</footer>
</body>
</html>
```

FILE: styles.css
```css
* { box-sizing: border-box; }
html, body { margin: 0; height: 100%; }
body {
  width: 1600px;
  height: 1041px;
  background: #000;
  overflow: hidden;
  position: relative;
  display: flex;
  flex-direction: column;
  font-family: "Inter", "Liberation Sans", sans-serif;
  color: #e3e3e3;
}
.defs { position: absolute; }

.wallpaper { position: absolute; left: 1420px; top: 932px; width: 180px; height: 109px; }
.wallpaper svg { display: block; }

/* Menu bar */
.menubar {
  height: 41px;
  flex: none;
  display: flex;
  align-items: center;
  justify-content: space-between;
  padding: 0 18px 2px 18px;
  font-size: 14px;
  color: #f0f0f0;
  position: relative;
}
.menu-left { display: flex; align-items: center; gap: 16.600px; }
.apple { margin-right: 4px; }
.menu-app { font-weight: 700; }
.menu-right { display: flex; align-items: center; gap: 20.500px; }
.clock { font-size: 14.500px; margin-left: 0; }

/* Window */
.window {
  height: 891px;
  flex: none;
  display: flex;
  flex-direction: column;
  border-radius: 11px;
  overflow: hidden;
  box-shadow: inset 0 0 0 1px #555;
  background: #1f1f1f;
  position: relative;
}
.tabstrip {
  height: 44px;
  flex: none;
  display: flex;
  align-items: flex-end;
  padding-left: 97px;
  position: relative;
  background: #202020;
  border-top: 1px solid #555;
}
.lights { position: absolute; left: 23px; top: 15px; display: flex; gap: 9px; }
.light { width: 13px; height: 13px; border-radius: 50%; display: block; }
.red { background: #ff5f57; }
.yellow { background: #febc2e; }
.green { background: #28c840; }
.tab {
  width: 259px;
  height: 36px;
  padding: 0 15px 9px 12px;
  display: flex;
  align-items: center;
  font-size: 13px;
  color: #d7d7d7;
  position: relative;
}
.tab + .tab::before {
  content: "";
  position: absolute;
  left: 0; top: 4px;
  width: 1px; height: 20px;
  background: #444;
}
.tab-active::before { display: none; }
.tab-active {
  background: #3c3c3c;
  color: #e8e8e8;
  width: 256px;
  margin-left: 3px;
  border-radius: 10px 10px 0 0;
  padding-left: 10px;
  padding-right: 16px;
}
.fav { width: 18px; height: 18px; flex: none; margin-right: 8px; }
.fav-gh { fill: #fff; }
.tab-title { flex: 1; overflow: hidden; white-space: nowrap; padding-right: 12px; }
.fade { -webkit-mask-image: linear-gradient(to right, #000 85%, transparent 93%); mask-image: linear-gradient(to right, #000 85%, transparent 93%); }
.tab-x { width: 10px; height: 10px; flex: none; }
.tab-plus { width: 14px; height: 14px; margin: 0 0 16px 11px; }
.tab-menu {
  position: absolute; right: 7px; top: 6px;
  width: 30px; height: 30px; border-radius: 10px;
  background: #3c3c3c;
  display: flex; align-items: center; justify-content: center;
}

.toolbar {
  height: 45px;
  flex: none;
  background: #3c3c3c;
  display: flex;
  align-items: center;
  padding: 5px 0 0 16px;
}
.nav { width: 16px; height: 16px; flex: none; margin-right: 23px; }
.omnibox {
  width: 1239px;
  height: 36px;
  margin-left: -1px;
  border-radius: 18px;
  background: #282828;
  display: flex;
  align-items: center;
  padding: 0 17px 0 3px;
}
.site-info {
  width: 28px; height: 28px; border-radius: 50%;
  background: #3c3c3c;
  display: flex; align-items: center; justify-content: center;
  margin-right: 8px;
  flex: none;
}
.url { flex: 1; font-size: 15.200px; color: #e8e8e8; white-space: nowrap; }
.ext-row { display: flex; align-items: center; gap: 20px; margin-left: 20px; }
.ext-sep { width: 1px; height: 22px; background: #555; display: block; margin: 0 -2px 0 -1px; }
.ext-dots { margin-left: 5px; }

.bookmarks {
  height: 43px;
  flex: none;
  background: #3c3c3c;
  border-bottom: 1px solid #1c1c1c;
  display: flex;
  align-items: center;
  padding: 0 0 2px 21px;
  font-size: 12.900px;
  color: #d8d8d8;
}
.bm-grid { width: 16px; height: 16px; flex: none; }
.bm-sep { width: 1px; height: 22px; background: #555; display: block; margin: 0 17px 0 16px; }
.bm { display: flex; align-items: center; white-space: nowrap; margin-right: 18.500px; }
.bm-algo { margin-right: 25px; }
.bi { flex: none; margin-right: 7px; }
.bi-g { width: 18px; height: 14px; }
.bi-y { width: 19px; height: 15px; margin-right: 5px; }
.bi-m { width: 13px; height: 20px; margin-right: 8px; }
.bi-d { width: 18px; height: 16px; }
.bi-globe { width: 14px; height: 14px; margin-right: 3px; }
.bi-c { width: 18px; height: 18px; }
.bi-f { width: 20px; height: 16px; }
.bolt {
  width: 18px; height: 18px; border-radius: 3px; background: #000;
  display: flex; align-items: center; justify-content: center; margin-right: 6px;
}
.calc-a, .calc-b { font: 700 7px "Liberation Mono", monospace; }
.calc-a { fill: #2a9d3a; }
.calc-b { fill: #c0392b; }
.wiki {
  width: 18px; height: 18px; border-radius: 3px; background: #fff; color: #222;
  font: 14px/18px "Liberation Serif", serif; text-align: center; margin-right: 7px;
}
.bm-more { width: 12px; height: 10px; margin-left: 70px; flex: none; }
.bm-sep2 { margin: 0 17px 0 18px; }
.bm-all { margin-right: 0; }

/* App viewport */
.viewport { flex: 1; min-height: 0; display: flex; }
.page { width: 1583px; position: relative; overflow: hidden; display: flex; flex-direction: column; font-family: "Roboto", sans-serif; background: #f5f5f6; }
.v-scrollbar { flex: 1; background: #2a2a2a; }
.app-header {
  height: 70px;
  flex: none;
  background: #000;
  display: flex;
  align-items: center;
  justify-content: space-between;
  padding: 0 21px 0 22px;
}
.brand { display: flex; align-items: center; gap: 12px; }
.brand-name { font-size: 24px; color: #fff; }
.header-actions { display: flex; align-items: center; gap: 12px; }
.lang {
  height: 45px;
  display: flex;
  border-radius: 23px;
  overflow: hidden;
  border: 1px solid #3a3a3a;
  font-size: 16px;
  font-weight: 500;
  color: #1a1c22;
}
.lang-on { width: 83px; background: #e2e6fb; display: flex; align-items: center; gap: 13px; padding-left: 11px; border-right: 1px solid #444; }
.lang-off { width: 45px; background: #fff; display: flex; align-items: center; padding-left: 11px; }
.nav-btn {
  height: 44px;
  padding: 0 13px;
  border: 0;
  border-radius: 12px;
  background: #a5cbda;
  color: #eaf3f6;
  font: 700 15.400px "Roboto", sans-serif;
}

.main { flex: 1; min-height: 0; display: flex; padding-left: 18px; gap: 34px; overflow: hidden; }
.sidebar {
  width: 305px;
  flex: none;
  background: #fff;
  padding: 0 22px 0 21.500px;
  margin-top: 22px;
  box-shadow: 0 0 10px rgba(0,0,0,.07);
  display: flex;
  flex-direction: column;
  gap: 39px;
}
.side-title { font-size: 49px; font-weight: 400; color: #000; line-height: 1; margin: 20px 0 -10px; }
.field {
  height: 61px;
  flex: none;
  background: #e0e2ec;
  border-bottom: 1.500px solid #5b5d66;
  border-radius: 4px 4px 0 0;
  padding: 2px 17px 0;
  display: flex;
  align-items: center;
  justify-content: space-between;
  font-size: 17.600px;
  letter-spacing: .5px;
  color: #6a6c75;
}
.cal { width: 24px; height: 24px; margin-right: -6px; opacity: .95; }

.cards { width: 696px; flex: none; padding-top: 35px; display: flex; flex-direction: column; gap: 18px; }
.card {
  flex: none;
  border: 1px solid #c4c4c8;
  border-radius: 12px;
  padding: 35px 35px 0;
  background: #f5f5f6;
}
.card:first-child { height: 394px; }
.card-title { font-size: 24px; font-weight: 400; line-height: 30px; margin: 0 0 .5px; color: #111; }
.card-line { font-size: 17.500px; line-height: 26px; letter-spacing: .5px; margin: 0 0 13px; color: #1a1c1e; }
.card-actions { display: flex; align-items: center; margin-top: 0; }
.check { margin: -4px 33px 0 0; }
.card-update { font-size: 15px; font-weight: 500; letter-spacing: .1px; color: #0f5fb8; margin-top: 14px; }

/* Dialog */
.scrim { position: absolute; inset: 0; background: rgba(0,0,0,.32); }
.modal {
  position: absolute;
  left: 574px;
  top: 201px;
  width: 435px;
  height: 357px;
  background: #fbf9fe;
  border-radius: 28px;
  padding: 24px 26px 0;
  display: flex;
  flex-direction: column;
}
.modal-title { font-size: 26px; font-weight: 400; line-height: 34px; margin: 0 0 28px; color: #1a1c1e; }
.m-field {
  position: relative;
  background: #dfe1ea;
  border-radius: 4px 4px 0 0;
  border-bottom: 1px solid #44474e;
  padding: 9px 17px 0 17.500px;
  height: 61px;
  margin-bottom: 22px;
}
.m-field-focus { height: 87px; border-bottom: 2.500px solid #0f5fb8; }
.m-label { display: block; font-size: 13px; line-height: 16px; letter-spacing: .4px; color: #44474e; }
.m-label-focus { color: #2c66c0; }
.m-value { display: block; font-size: 17.500px; line-height: 26px; letter-spacing: .5px; color: #1a1c1e; margin-top: 2px; white-space: nowrap; }
.m-scroll {
  position: absolute; right: 18px; top: 26px;
  width: 15px; height: 52px; background: #fbfbfb;
}
.m-thumb { position: absolute; left: 4px; top: 18px; width: 8px; height: 18px; border-radius: 4px; background: #b5b5b5; display: block; }
.m-grip { position: absolute; right: 0; bottom: 0; }
.m-actions { display: flex; gap: 36px; padding-left: 126px; margin-top: 31px; }
.m-btn { font-size: 15px; font-weight: 500; letter-spacing: .1px; color: #0f5fb8; }

/* Dock */
.dock {
  position: relative;
  flex: none;
  width: 1447px;
  height: 97px;
  margin: 6px 0 0 76px;
  padding: 13px 0 0 12px;
  border: 1px solid #3c3c3c;
  border-radius: 24px;
  background: linear-gradient(to right, #121212 0, #121212 1280px, #4c4c4c 1447px);
  display: flex;
  align-items: flex-start;
  gap: 20.300px;
}
.dock-item { width: 65px; height: 65px; flex: none; position: relative; }
.dock-item > svg { width: 65px; height: 65px; display: block; overflow: visible; }
.dock-item > svg.dock-over { height: 83px; margin-top: -18px; }
.dock-item > svg.opera { width: 71px; height: 71px; margin: -3px 0 0 -3px; }
.dock-item > svg.trash { height: 78px; margin: -13px 0 0 2px; width: 58px; }
.dock-gh { fill: #fff; }
.dot::after {
  content: "";
  position: absolute;
  left: 31px; top: 77px;
  width: 3px; height: 4px;
  border-radius: 2px;
  background: #9a9a9a;
}
.dock-sep { width: 1px; height: 70px; background: #4a4a4a; flex: none; margin: 0 9px; display: block; }
.dock-sep:last-of-type { background: #777; }
.logo-text { font: 700 5px "Roboto", sans-serif; fill: #2a6a5c; }
.ws-text { font: 700 23px "Roboto", sans-serif; fill: #fff; }
```
